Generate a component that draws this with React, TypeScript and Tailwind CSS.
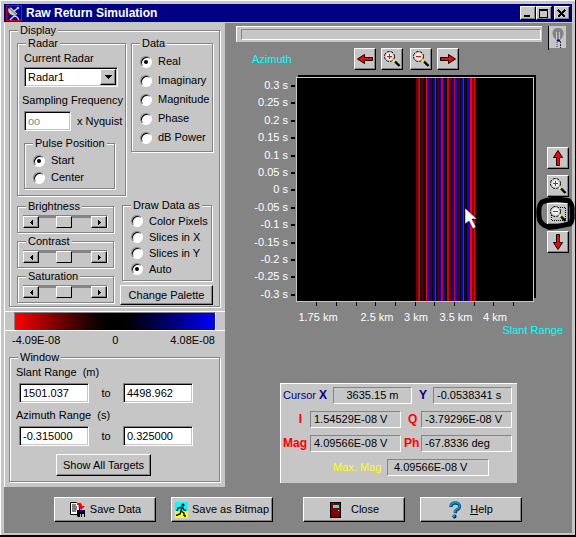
import React from "react";

const RAISED =
  "bg-[#c6c6c6] border border-t-white border-l-white border-r-black border-b-black shadow-[inset_-1px_-1px_0_#848484]";
const SUNKEN =
  "border border-t-[#848484] border-l-[#848484] border-r-white border-b-white";
const FIELD =
  "bg-white border border-t-[#848484] border-l-[#848484] border-r-white border-b-white shadow-[inset_1px_1px_0_#000,inset_-1px_-1px_0_#c6c6c6]";

function Group({
  title,
  className = "",
  inner = "",
  children,
}: {
  title: string;
  className?: string;
  inner?: string;
  children: React.ReactNode;
}) {
  return (
    <fieldset
      className={`min-w-0 border border-[#848484] shadow-[1px_1px_0_#fff,inset_1px_1px_0_#fff] ${className}`}
    >
      <legend className="ml-2 bg-[#c6c6c6] px-[2px] whitespace-nowrap">{title}</legend>
      <div className={inner}>{children}</div>
    </fieldset>
  );
}

function Radio({
  name,
  label,
  checked = false,
  className = "",
}: {
  name: string;
  label: string;
  checked?: boolean;
  className?: string;
}) {
  return (
    <label className={`flex items-center gap-[6px] whitespace-nowrap ${className}`}>
      <input
        type="radio"
        name={name}
        defaultChecked={checked}
        className="grid size-3 shrink-0 appearance-none place-items-center rounded-full border border-t-[#848484] border-l-[#848484] border-r-white border-b-white bg-white shadow-[inset_1px_1px_0_#000] checked:before:size-1 checked:before:rounded-full checked:before:bg-black checked:before:content-['']"
      />
      {label}
    </label>
  );
}

function ScrollGroup({ title }: { title: string }) {
  return (
    <Group title={title} inner="px-[5px] pt-[2px] pb-1">
      <div className="flex h-[13px] border-t border-r border-t-[#848484] border-r-white bg-[#848484]">
        <button aria-label={`Decrease ${title}`} className={`grid w-4 place-items-center ${RAISED}`}>
          <svg width="3" height="5" viewBox="0 0 3 5" shapeRendering="crispEdges">
            <path d="M3 0v5L0 2.5z" />
          </svg>
        </button>
        <input
          type="range"
          aria-label={title}
          defaultValue={48}
          className="h-3 min-w-0 flex-1 appearance-none bg-[#c6c6c6] shadow-[inset_0_2px_0_#848484] [&::-webkit-slider-thumb]:h-3 [&::-webkit-slider-thumb]:w-4 [&::-webkit-slider-thumb]:appearance-none [&::-webkit-slider-thumb]:border [&::-webkit-slider-thumb]:border-t-white [&::-webkit-slider-thumb]:border-r-black [&::-webkit-slider-thumb]:border-b-black [&::-webkit-slider-thumb]:border-l-white [&::-webkit-slider-thumb]:bg-[#c6c6c6]"
        />
        <button aria-label={`Increase ${title}`} className={`grid w-4 place-items-center ${RAISED}`}>
          <svg width="3" height="5" viewBox="0 0 3 5" shapeRendering="crispEdges">
            <path d="M0 0v5L3 2.5z" />
          </svg>
        </button>
      </div>
    </Group>
  );
}

function RangeRow({ label, from, to }: { label: string; from: string; to: string }) {
  return (
    <div className="flex items-center pl-[9px]">
      <input aria-label={`${label} from`} defaultValue={from} className={`h-5 w-[70px] px-[3px] ${FIELD}`} />
      <span className="w-[34px] text-center">to</span>
      <input aria-label={`${label} to`} defaultValue={to} className={`h-5 w-[70px] px-[3px] ${FIELD}`} />
    </div>
  );
}

function Arrow({ turn }: { turn: string }) {
  return (
    <svg width="16" height="16" viewBox="0 0 16 16" className={turn}>
      <path d="M.5 8L7.500 3.500V6.500H15.500V9.500H7.500V12.500z" fill="#f00" stroke="#000" />
    </svg>
  );
}

function Lens({ plus = false, area = false }: { plus?: boolean; area?: boolean }) {
  return (
    <svg width="18" height="18" viewBox="0 0 18 18">
      {area && (
        <rect x="2.5" y="2.5" width="14" height="13" fill="none" stroke="#000" strokeDasharray="1 1" shapeRendering="crispEdges" />
      )}
      <circle cx="6.5" cy="6.5" r="5" fill="#f4f4f4" stroke="#000" strokeDasharray="3 1" />
      <circle cx="6.5" cy="6.5" r="4" fill="none" stroke="#a8a8a8" strokeWidth=".6" />
      <path d={plus ? "M4 6.5H9M6.5 4V9" : "M4 6.5H9"} stroke="#f00" shapeRendering="crispEdges" />
      <path d="M10 10l2 2" stroke="#ff0" strokeWidth="2" />
      <path d="M12 11.5L16.5 16" stroke="#000" strokeWidth="2.4" />
    </svg>
  );
}

function Tool({ label, children }: { label: string; children: React.ReactNode }) {
  return (
    <button aria-label={label} className={`grid size-[22px] place-items-center ${RAISED}`}>
      {children}
    </button>
  );
}

function CaptionButton({ label, children }: { label: string; children: React.ReactNode }) {
  return (
    <button aria-label={label} className={`grid h-[14px] w-4 place-items-center ${RAISED}`}>
      <svg width="10" height="9" viewBox="0 0 10 9" fill="none" stroke="#000" shapeRendering="crispEdges">
        {children}
      </svg>
    </button>
  );
}

function Readout({ children, className = "" }: { children: React.ReactNode; className?: string }) {
  return (
    <output className={`h-[17px] whitespace-nowrap px-[3px] leading-[15px] ${SUNKEN} ${className}`}>
      {children}
    </output>
  );
}

// [offset from the first stripe, width, colour]
const STRIPES: [number, number, string][] = [
  [0, 2, "#700000"], [2, 1, "#b00000"], [3, 1, "#f00000"], [5, 1, "#0000d0"],
  [6, 1, "#600000"], [10, 1, "#ff0000"], [11, 2, "#0000f0"], [14, 2, "#500000"],
  [17, 2, "#0000d0"], [19, 1, "#e00000"], [21, 1, "#0000a0"], [22, 1, "#600000"],
  [24, 1, "#0000f0"], [25, 2, "#d00000"], [27, 3, "#000080"], [31, 2, "#d00000"],
  [33, 1, "#0000d0"], [34, 1, "#600000"], [36, 1, "#0000a0"], [38, 1, "#d00000"],
  [39, 2, "#0000f0"], [42, 2, "#500000"], [45, 2, "#0000d0"], [47, 1, "#e00000"],
  [49, 1, "#400000"], [51, 2, "#0000ff"], [53, 1, "#300040"], [54, 2, "#ff0000"],
  [56, 2, "#800000"], [58, 1, "#f00000"],
];

const Y_LABELS = [
  "0.3 s", "0.25 s", "0.2 s", "0.15 s", "0.1 s", "0.05 s", "0 s",
  "-0.05 s", "-0.1 s", "-0.15 s", "-0.2 s", "-0.25 s", "-0.3 s",
];

const X_LABELS: [number, string][] = [
  [82, "1.75 km"], [141, "2.5 km"], [180, "3 km"], [220, "3.5 km"], [259, "4 km"],
];

const X_TICKS = [80, 100, 120, 139, 159, 179, 198, 218, 238, 257, 277];

function Plot() {
  return (
    <svg viewBox="0 0 306 249" className="block w-full" role="img" aria-label="Azimuth against slant range">
      <g shapeRendering="crispEdges">
        <rect x="62" y="1" width="238" height="223" />
        <rect x="60.5" y="3.5" width="237" height="224" fill="#000" stroke="#c6c6c6" />
        {STRIPES.map(([x, w, c]) => (
          <rect key={x} x={180 + x} y="4" width={w} height="223" fill={c} />
        ))}
        {Y_LABELS.map((t, i) => (
          <rect key={t} x="55" y={11 + Math.round(i * 17.4)} width="4" height="2" />
        ))}
        {X_TICKS.map((x) => (
          <rect key={x} x={x} y="228" width="1" height="4" />
        ))}
      </g>
      <g fill="#fff">
        {Y_LABELS.map((t, i) => (
          <text key={t} x="52" y={15 + Math.round(i * 17.4)} textAnchor="end">
            {t}
          </text>
        ))}
        {X_LABELS.map(([x, t]) => (
          <text key={t} x={x} y="247" textAnchor="middle">
            {t}
          </text>
        ))}
      </g>
      <path d="M229 134v16l4-3 4 8 3-2-4-8h5z" fill="#fff" stroke="#000" strokeWidth=".5" />
    </svg>
  );
}

function FooterButton({ icon, children }: { icon: React.ReactNode; children: React.ReactNode }) {
  return (
    <button className={`flex h-[25px] w-[102px] items-center justify-center gap-1 whitespace-nowrap ${RAISED}`}>
      {icon}
      <span>{children}</span>
    </button>
  );
}

export default function App() {
  return (
    <main className="flex min-h-screen flex-col border-r border-b-2 border-r-black border-b-black bg-[#c6c6c6] font-['Liberation_Sans',Arial,sans-serif] text-[11px] leading-[13px] text-black">
      <div className="flex flex-1 flex-col border-t border-l border-white p-[3px] pb-[2px]">
        <header className="flex h-[18px] items-center gap-1 bg-[#000084] px-[2px] text-white">
          <svg width="16" height="16" viewBox="0 0 16 16">
            <rect x=".5" y=".5" width="15" height="15" fill="#0000a8" stroke="#c00" />
            <path d="M2 3c-1 5 2 8 8 8l2-2L5 2z" fill="#c6c6c6" stroke="#000" strokeWidth=".6" />
            <path d="M12 3L7 7M4 15l4-4 3 1 2 3" stroke="#e8e8e8" fill="none" strokeWidth="1.2" />
            <path d="M3 3l8 7" stroke="#606060" />
            <circle cx="12" cy="3" r="1.300" fill="#c6c6c6" />
          </svg>
          <h1 className="flex-1 text-[12px] font-bold">Raw Return Simulation</h1>
          <div className="flex">
            <CaptionButton label="Minimize">
              <path d="M1 7.500H7M1 6.500H7" />
            </CaptionButton>
            <CaptionButton label="Maximize">
              <path d="M.5 .5h8v8h-8zM0 1.500h9" />
            </CaptionButton>
            <span className="w-[2px]" />
            <CaptionButton label="Close window">
              <path d="M1 1l7 7M8 1L1 8" strokeWidth="1.600" />
            </CaptionButton>
          </div>
        </header>

        <div className="mt-px flex flex-1 flex-col bg-[#848484]">
          <div className="flex">
            <section className="w-[221px] shrink-0 border-l border-white bg-[#c6c6c6] pt-px pb-[5px]">
              <Group title="Display" className="mr-[5px] ml-1" inner="pr-[6px] pb-px pl-[7px]">
                <div className="flex items-start justify-between">
                  <Group title="Radar" className="w-[109px]" inner="pb-[6px] pl-[6px]">
                    <label htmlFor="radar" className="block pt-[2px]">
                      Current Radar
                    </label>
                    <div className="relative mt-[2px] w-[94px]">
                      <select id="radar" className={`block h-5 w-full appearance-none pl-[3px] ${FIELD}`}>
                        <option>Radar1</option>
                      </select>
                      <span
                        className={`pointer-events-none absolute top-[2px] right-[2px] grid h-4 w-4 place-items-center ${RAISED}`}
                      >
                        <svg width="7" height="4" viewBox="0 0 7 4" shapeRendering="crispEdges">
                          <path d="M0 0h7L3.500 4z" />
                        </svg>
                      </span>
                    </div>
                    <label htmlFor="sampling" className="-ml-[2px] block pt-[7px] whitespace-nowrap">
                      Sampling Frequency
                    </label>
                    <div className="mt-1 flex items-center gap-[6px] whitespace-nowrap">
                      <input
                        id="sampling"
                        defaultValue="oo"
                        disabled
                        className={`h-5 w-[47px] px-[3px] text-[#848484] ${FIELD}`}
                      />
                      x Nyquist
                    </div>
                    <Group title="Pulse Position" className="mt-[6px] mr-[10px]" inner="pt-[2px] pb-[2px] pl-[8px]">
                      <Radio name="pulse" label="Start" checked className="h-[17px]" />
                      <Radio name="pulse" label="Center" className="h-[17px]" />
                    </Group>
                  </Group>
                  <Group title="Data" className="w-[82px]" inner="pt-[2px] pb-1 pl-[8px]">
                    <Radio name="data" label="Real" checked className="h-[19px]" />
                    <Radio name="data" label="Imaginary" className="h-[19px]" />
                    <Radio name="data" label="Magnitude" className="h-[19px]" />
                    <Radio name="data" label="Phase" className="h-[19px]" />
                    <Radio name="data" label="dB Power" className="h-[19px]" />
                  </Group>
                </div>
                <div className="mt-[3px] flex justify-between">
                  <div className="mt-px flex w-[97px] flex-col gap-[2px]">
                    <ScrollGroup title="Brightness" />
                    <ScrollGroup title="Contrast" />
                    <ScrollGroup title="Saturation" />
                  </div>
                  <div className="flex w-[93px] flex-col gap-1">
                    <Group title="Draw Data as" className="mr-px ml-[2px]" inner="pt-px pb-[3px] pl-[8px]">
                      <Radio name="draw" label="Color Pixels" className="h-4" />
                      <Radio name="draw" label="Slices in X" className="h-4" />
                      <Radio name="draw" label="Slices in Y" className="h-4" />
                      <Radio name="draw" label="Auto" checked className="h-4" />
                    </Group>
                    <button className={`h-5 whitespace-nowrap ${RAISED}`}>Change Palette</button>
                  </div>
                </div>
              </Group>

              <div className="mt-1 border-y border-white px-[9px]">
                <div className="h-[18px] border-t border-r border-l border-t-[#848484] border-r-white border-l-[#848484] bg-linear-to-r from-[#f00] via-black to-[#00f]" />
              </div>
              <div className="flex justify-between pt-[3px] pr-[10px] pl-[7px]">
                <span>-4.09E-08</span>
                <span>0</span>
                <span>4.08E-08</span>
              </div>

              <Group title="Window" className="mt-1 mr-[5px] ml-1" inner="pt-[2px] pb-[5px]">
                <p className="pl-[6px] whitespace-pre">Slant Range  (m)</p>
                <div className="mt-1">
                  <RangeRow label="Slant Range" from="1501.037" to="4498.962" />
                </div>
                <p className="mt-[6px] pl-[6px] whitespace-pre">Azimuth Range  (s)</p>
                <div className="mt-1">
                  <RangeRow label="Azimuth Range" from="-0.315000" to="0.325000" />
                </div>
                <button className={`mt-2 ml-[46px] block h-[22px] w-[95px] whitespace-nowrap ${RAISED}`}>
                  Show All Targets
                </button>
              </Group>
            </section>

            <section className="flex min-w-0 flex-1 flex-col pt-[3px] pl-[11px]">
              <div className="flex items-start">
                <div className="h-4 flex-1 border-t border-l border-white bg-[#c6c6c6] pt-[2px] pr-px pl-1">
                  <div role="progressbar" aria-label="Progress" className={`h-[11px] ${SUNKEN}`} />
                </div>
                <svg width="18" height="24" viewBox="0 0 18 24" className="mr-[6px] ml-[6px]">
                  <rect width="18" height="22" fill="#c6c6c6" />
                  <path d="M.5 0v24" stroke="#000" />
                  <path d="M8 14C3 10 3 2 10 2S17 10 12 14z" fill="#848484" />
                  <path d="M8.500 6v8M11.500 6v8" stroke="#c6c6c6" />
                  <path d="M9 14v8" stroke="#848484" strokeWidth="2" strokeDasharray="1 1" />
                  <path d="M12.500 15v7" stroke="#222" strokeDasharray="2 1" />
                  <path d="M9 14.500h3" stroke="#00c" strokeWidth="2" />
                  <path d="M11 15.500h2" stroke="#d00" />
                </svg>
              </div>

              <div className="-mt-[2px] flex">
                <div className="min-w-0 flex-1">
                  <div className="flex items-center pl-4">
                    <span className="w-[102px] text-[#0ff]">Azimuth</span>
                    <div className="flex gap-[5px]">
                      <Tool label="Pan left">
                        <Arrow turn="" />
                      </Tool>
                      <Tool label="Zoom in range">
                        <Lens plus />
                      </Tool>
                      <span className="-mr-[3px]" />
                      <Tool label="Zoom out range">
                        <Lens />
                      </Tool>
                      <Tool label="Pan right">
                        <Arrow turn="rotate-180" />
                      </Tool>
                    </div>
                  </div>
                  <div className="mt-1">
                    <Plot />
                  </div>
                </div>
                <div className="flex w-[30px] flex-col items-start gap-[6px] pt-[99px] pl-[5px]">
                  <Tool label="Pan up">
                    <Arrow turn="rotate-90" />
                  </Tool>
                  <Tool label="Zoom in azimuth">
                    <Lens plus />
                  </Tool>
                  <div className="relative">
                    <Tool label="Zoom out azimuth">
                      <Lens area />
                    </Tool>
                    <svg
                      width="42"
                      height="36"
                      viewBox="0 0 42 36"
                      className="pointer-events-none absolute -top-[6px] -left-[12px]"
                    >
                      <path
                        d="M7 5C16 1 26 2 34 4Q38 8 37 15Q38 24 35 27C27 28 20 31 13 30Q4 27 4 19Q3 9 7 5z"
                        fill="none"
                        stroke="#000"
                        strokeWidth="5"
                      />
                    </svg>
                  </div>
                  <Tool label="Pan down">
                    <Arrow turn="-rotate-90" />
                  </Tool>
                </div>
              </div>
              <p className="mt-px pr-[9px] text-right text-[#0ff]">Slant Range</p>

              <div className="mt-[46px] ml-[44px] flex h-[100px] w-[237px] flex-col gap-[7px] border-t border-l border-white bg-[#c6c6c6] pt-[3px] pl-[2px]">
                <div className="flex items-center text-[#000084]">
                  <span className="w-9">Cursor</span>
                  <b className="w-[14px] text-[12px]">X</b>
                  <Readout className="w-[79px] text-center text-black">3635.15 m</Readout>
                  <b className="w-[21px] pl-[7px] text-[12px]">Y</b>
                  <Readout className="w-[79px] text-black">-0.0538341 s</Readout>
                </div>
                <div className="flex items-center text-[#f00]">
                  <b className="w-[27px] pr-2 text-right text-[12px]">I</b>
                  <Readout className="w-[91px] text-black">1.54529E-08 V</Readout>
                  <b className="w-5 pl-[7px] text-[12px]">Q</b>
                  <Readout className="w-[91px] text-black">-3.79296E-08 V</Readout>
                </div>
                <div className="flex items-center text-[#f00]">
                  <b className="w-[27px] text-[12px]">Mag</b>
                  <Readout className="w-[91px] text-black">4.09566E-08 V</Readout>
                  <b className="w-5 pl-[3px] text-[12px]">Ph</b>
                  <Readout className="w-[91px] text-black">-67.8336 deg</Readout>
                </div>
                <div className="flex items-center pl-[50px]">
                  <span className="w-[54px] text-[#ff0]">Max. Mag</span>
                  <Readout className="w-[102px] pl-[6px]">4.09566E-08 V</Readout>
                </div>
              </div>
            </section>
          </div>

          <footer className="flex gap-[15px] pt-[10px] pb-[11px] pl-[50px]">
            <FooterButton
              icon={
                <svg width="17" height="17" viewBox="0 0 17 17">
                  <path d="M1.500 1.500h6l3 3v9h-9z" fill="#fff" stroke="#000" />
                  <path d="M3 4h4M3 6h5M3 8h5M3 10h4" stroke="#000" />
                  <path d="M8 2h3q2 0 2 3h3l-4 4-3-4h2q0-1-3-1z" fill="#f00" />
                  <path d="M8 9h8v7H9l-1-1z" fill="#000" />
                  <path d="M10 9h4v2h-4z" fill="#00c" />
                  <path d="M11 13h4v3h-4z" fill="#c6c6c6" />
                  <path d="M12 13h1v3h-1z" fill="#000" />
                </svg>
              }
            >
              Save Data
            </FooterButton>
            <FooterButton
              icon={
                <svg width="13" height="16" viewBox="0 0 13 16">
                  <path d="M0 0h13v9H0z" fill="#0ff" />
                  <path d="M0 9h13v7H0z" fill="#ff0" />
                  <circle cx="8" cy="3" r="1.500" />
                  <path d="M7 5L6 9l3 2v3M6 9l-1 3-4 1.500M7 5L3 6 2 9M7.500 5L9 8l2 .500M9 14h2" fill="none" stroke="#000" strokeWidth="1.400" />
                </svg>
              }
            >
              Save as Bitmap
            </FooterButton>
            <span className="w-0" />
            <FooterButton
              icon={
                <svg width="14" height="18" viewBox="0 0 14 18" className="mr-1" shapeRendering="crispEdges">
                  <path d="M1.500 1.500h10v15h-10z" fill="#840000" stroke="#000" />
                  <path d="M4 4h6v3H4z" fill="#0ff" />
                  <path d="M9 9h1v1H9z" fill="#ff0" />
                </svg>
              }
            >
              Close
            </FooterButton>
            <FooterButton
              icon={
                <svg width="13" height="18" viewBox="0 0 13 18" className="mr-1" fill="none">
                  <path d="M2 6q0-4 4-4 5 0 4.500 4Q10 8 7 9.500L6 12" stroke="#000084" strokeWidth="3" />
                  <path d="M2 5.500q0-4 4-4 5 0 4.500 4Q10 7.500 6.500 9L5.500 11.500" stroke="#00a0a0" strokeWidth="2.200" />
                  <circle cx="5.500" cy="15.500" r="2" fill="#000084" />
                  <circle cx="5" cy="15" r="1.500" fill="#00a0a0" />
                </svg>
              }
            >
              <u>H</u>elp
            </FooterButton>
          </footer>
        </div>
      </div>
    </main>
  );
}
